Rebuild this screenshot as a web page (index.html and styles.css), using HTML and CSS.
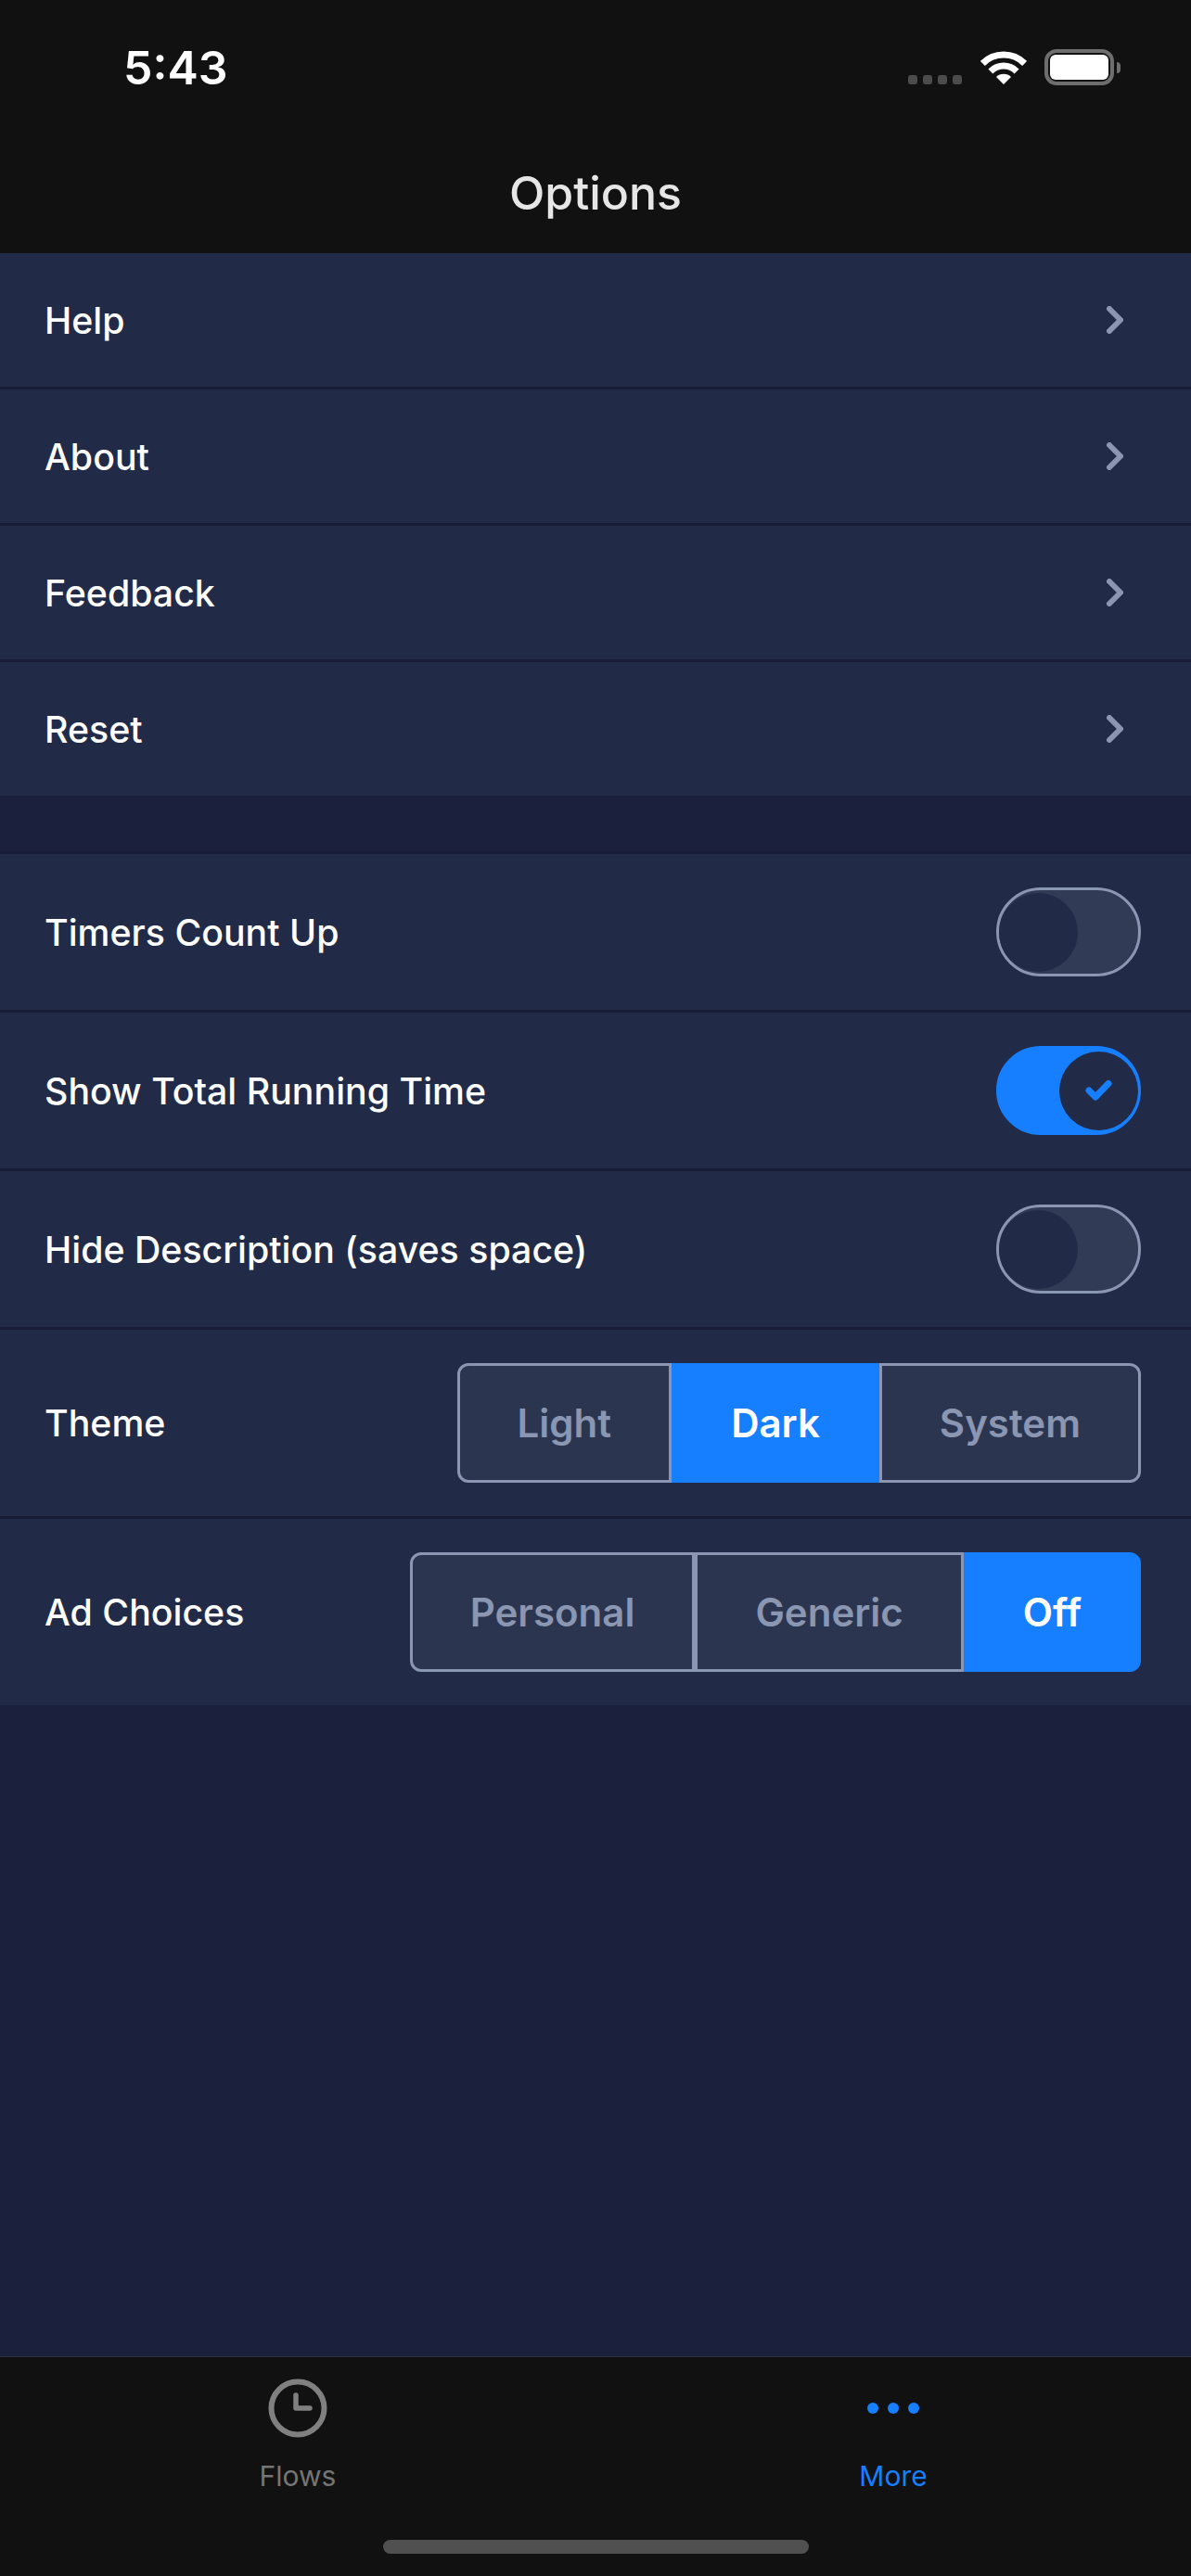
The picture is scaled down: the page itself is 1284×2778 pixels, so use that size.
FILE: index.html
```html
<!DOCTYPE html>
<html lang="en">
<head>
    <meta charset="UTF-8">
    <meta name="viewport" content="width=device-width, initial-scale=1.0">
    <title>Options</title>
    <link rel="stylesheet" href="styles.css">
</head>
<body>
    <div class="app">
        <header class="top">
            <div class="status">
                <span class="time">5:43</span>
                <div class="status-icons">
                    <div class="signal"><i></i><i></i><i></i><i></i></div>
                    <svg class="wifi" width="50" height="37" viewBox="0 0 50 37">
                        <path d="M2.4 14.4A32 32 0 0 1 47.6 14.4" fill="none" stroke="#fff" stroke-width="7"/>
                        <path d="M10.9 22.9A20 20 0 0 1 39.1 22.9" fill="none" stroke="#fff" stroke-width="7"/>
                        <path d="M25 37L17 29A11.3 11.3 0 0 1 33 29Z" fill="#fff"/>
                    </svg>
                    <div class="battery"><div class="battery-fill"></div></div>
                    <div class="battery-tip"></div>
                </div>
            </div>
            <h1 class="title">Options</h1>
        </header>

        <main class="content">
            <section class="group">
                <div class="row link-row"><span>Help</span><svg class="chevron" width="18" height="30" viewBox="0 0 18 30"><path d="M3 3L15 15L3 27" fill="none" stroke="#8a96b2" stroke-width="6" stroke-linecap="round" stroke-linejoin="round"/></svg></div>
                <div class="row link-row"><span>About</span><svg class="chevron" width="18" height="30" viewBox="0 0 18 30"><path d="M3 3L15 15L3 27" fill="none" stroke="#8a96b2" stroke-width="6" stroke-linecap="round" stroke-linejoin="round"/></svg></div>
                <div class="row link-row"><span>Feedback</span><svg class="chevron" width="18" height="30" viewBox="0 0 18 30"><path d="M3 3L15 15L3 27" fill="none" stroke="#8a96b2" stroke-width="6" stroke-linecap="round" stroke-linejoin="round"/></svg></div>
                <div class="row link-row"><span>Reset</span><svg class="chevron" width="18" height="30" viewBox="0 0 18 30"><path d="M3 3L15 15L3 27" fill="none" stroke="#8a96b2" stroke-width="6" stroke-linecap="round" stroke-linejoin="round"/></svg></div>
            </section>

            <section class="group second">
                <div class="row toggle-row">
                    <span>Timers Count Up</span>
                    <div class="toggle"><div class="knob"></div></div>
                </div>
                <div class="row toggle-row">
                    <span>Show Total Running Time</span>
                    <div class="toggle on">
                        <div class="knob">
                            <svg width="30" height="24" viewBox="0 0 30 24"><path d="M4 12L11 19L25 4.500" fill="none" stroke="#157fff" stroke-width="7" stroke-linecap="round" stroke-linejoin="round"/></svg>
                        </div>
                    </div>
                </div>
                <div class="row toggle-row">
                    <span>Hide Description (saves space)</span>
                    <div class="toggle"><div class="knob"></div></div>
                </div>
                <div class="row seg-row">
                    <span>Theme</span>
                    <div class="seg">
                        <div class="opt first">Light</div>
                        <div class="opt active">Dark</div>
                        <div class="opt last">System</div>
                    </div>
                </div>
                <div class="row seg-row">
                    <span>Ad Choices</span>
                    <div class="seg">
                        <div class="opt first">Personal</div>
                        <div class="opt">Generic</div>
                        <div class="opt active last">Off</div>
                    </div>
                </div>
            </section>
        </main>

        <footer class="tabbar">
            <div class="tabs">
                <div class="tab">
                    <div class="tab-icon">
                        <svg width="64" height="64" viewBox="0 0 64 64">
                            <circle cx="32" cy="32" r="28.500" fill="none" stroke="#808080" stroke-width="6"/>
                            <path d="M30 18V32H45" fill="none" stroke="#808080" stroke-width="5.500" stroke-linecap="round" stroke-linejoin="round"/>
                        </svg>
                    </div>
                    <span>Flows</span>
                </div>
                <div class="tab current">
                    <div class="tab-icon">
                        <div class="dots"><i></i><i></i><i></i></div>
                    </div>
                    <span>More</span>
                </div>
            </div>
            <div class="home-bar"></div>
        </footer>
    </div>
</body>
</html>
```

FILE: styles.css
```css
/* Dark options screen */
* {
    box-sizing: border-box;
}

body {
    margin: 0;
    background-color: #1b203c;
    color: #ffffff;
    font-family: Inter, "Noto Sans", sans-serif;
}

.app {
    display: flex;
    flex-direction: column;
    height: 2778px;
}

/* Header */
.top {
    height: 273px;
    background: #111111;
}

.status {
    display: flex;
    justify-content: space-between;
    height: 178px;
    padding: 53px 83px 0 133px;
}

.time {
    font-size: 50px;
    font-weight: 600;
    line-height: 40px;
}

.status-icons {
    display: flex;
    align-items: flex-start;
}

.signal {
    display: flex;
    gap: 6px;
    margin-top: 28px;
    margin-right: 20px;
}

.signal i {
    width: 10px;
    height: 10px;
    border-radius: 3px;
    background: #4c4c4c;
}

.wifi {
    margin-top: 1px;
    margin-right: 19px;
}

.battery {
    width: 75px;
    height: 39px;
    padding: 2px;
    border: 4px solid #6e6e6e;
    border-radius: 13px;
}

.battery-fill {
    height: 100%;
    background: #ffffff;
    border-radius: 6px;
}

.battery-tip {
    width: 4px;
    height: 12px;
    margin-top: 14px;
    margin-left: 3px;
    margin-right: -7px;
    background: #6e6e6e;
    border-radius: 0 6px 6px 0;
}

.title {
    margin: 0;
    color: #e6e6e6;
    font-size: 50px;
    font-weight: 500;
    line-height: 60px;
    text-align: center;
}

/* Rows */
.content {
    flex: 1;
}

.group.second {
    margin-top: 60px;
    border-top: 3px solid #181c36;
}

.row {
    display: flex;
    align-items: center;
    justify-content: space-between;
    background: #212b47;
    border-bottom: 3px solid #181c36;
    padding: 0 54px 0 48px;
    font-size: 39.300px;
    font-weight: 500;
}

.link-row {
    height: 147px;
    padding-right: 73px;
}

.toggle-row {
    height: 171px;
}

.seg-row {
    height: 204px;
}

.link-row:last-child {
    height: 144px;
    border-bottom: none;
}

.seg-row:last-child {
    height: 201px;
    border-bottom: none;
}

/* Toggles */
.toggle {
    display: flex;
    align-items: center;
    width: 156px;
    height: 96px;
    border: 3px solid #8a96b2;
    border-radius: 48px;
    background: #323b56;
}

.toggle.on {
    justify-content: flex-end;
    border-color: #157fff;
    background: #157fff;
}

.knob {
    display: flex;
    align-items: center;
    justify-content: center;
    width: 85px;
    height: 85px;
    border-radius: 50%;
    background: #212b47;
}

/* Segmented controls */
.seg {
    display: flex;
    height: 129px;
    font-size: 42px;
    font-weight: 600;
}

.opt {
    display: flex;
    align-items: center;
    padding: 0 62px;
    border: 3px solid #8a96b2;
    background: #2b3550;
    color: #8a96b2;
}

.opt.first {
    border-radius: 12px 0 0 12px;
}

.opt.last {
    border-radius: 0 12px 12px 0;
}

.opt.active {
    padding: 0 61px;
    border-color: #157fff;
    background: #157fff;
    color: #ffffff;
}

/* Tab bar */
.tabbar {
    height: 237px;
    background: #111111;
    border-top: 1px solid #2a2f3f;
}

.tabs {
    display: flex;
    justify-content: space-around;
    height: 197px;
}

.tab {
    display: flex;
    flex-direction: column;
    align-items: center;
    width: 642px;
    padding-top: 23px;
    color: #757575;
    font-size: 30px;
}

.tab.current {
    color: #157fff;
}

.tab-icon {
    display: flex;
    align-items: center;
    justify-content: center;
    height: 64px;
    margin-bottom: 23px;
}

.dots {
    display: flex;
    gap: 10px;
}

.dots i {
    width: 12px;
    height: 12px;
    border-radius: 50%;
    background: #157fff;
}

.home-bar {
    width: 459px;
    height: 15px;
    margin: 0 auto;
    background: #505050;
    border-radius: 8px;
}
```
